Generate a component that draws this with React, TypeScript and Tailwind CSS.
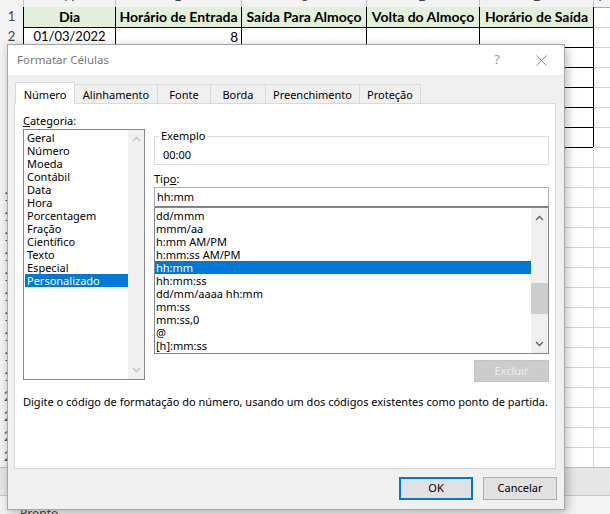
import React from "react";

const catItems = ["Geral", "Número", "Moeda", "Contábil", "Data", "Hora", "Porcentagem", "Fração", "Científico", "Texto", "Especial", "Personalizado"];
const typeItems = ["dd/mmm", "mmm/aa", "h:mm AM/PM", "h:mm:ss AM/PM", "hh:mm", "hh:mm:ss", "dd/mm/aaaa hh:mm", "mm:ss", "mm:ss,0", "@", "[h]:mm:ss"];
const headers = ["Dia", "Horário de Entrada", "Saída Para Almoço", "Volta do Almoço", "Horário de Saída"];
const grid = "grid grid-cols-[24px_92px_126px_125px_113px_114px_1fr] h-[20px] shrink-0";

function Chevron({ up, color }: { up: boolean; color: string }) {
  return (
    <svg width="9" height="6" viewBox="0 0 9 6">
      <path d={up ? "M1 5 L4.5 1.5 L8 5" : "M1 1 L4.5 4.5 L8 1"} fill="none" stroke={color} strokeWidth="1.3" />
    </svg>
  );
}

function Row({ r }: { r: number }) {
  const boxed = r <= 7;
  return (
    <div className={grid}>
      <div
        className={
          boxed
            ? "bg-[#f3f3f3] border-r border-b border-r-black border-b-[#c6c6c6] flex items-center justify-center text-[13px] text-[#444]"
            : "bg-[#f3f3f3] border-r border-b border-r-[#c6c6c6] border-b-[#c6c6c6] flex items-center justify-center text-[13px] text-[#444]"
        }
      >
        {r}
      </div>
      {[0, 1, 2, 3, 4].map((c) => {
        let cls = "border-r border-b border-r-[#d4d4d4] border-b-[#d4d4d4]";
        if (boxed) cls = "border-r border-b border-r-black border-b-black";
        if (r === 1) cls += " bg-[#e2efda] font-bold text-[14px] flex items-center justify-center text-black whitespace-nowrap overflow-hidden";
        else cls += " flex items-center text-[13.5px] text-black";
        let content: React.ReactNode = null;
        if (r === 1) content = headers[c];
        if (r === 2 && c === 0) content = <span className="w-full text-center text-[13px]">01/03/2022</span>;
        if (r === 2 && c === 1) content = <span className="w-full text-right pr-[3px]">8</span>;
        return (
          <div key={c} className={cls}>
            {content}
          </div>
        );
      })}
      <div className="border-b border-b-[#d4d4d4]" />
    </div>
  );
}

function Sheet() {
  const rows = Array.from({ length: 23 }, (_, i) => i + 1);
  return (
    <div className="flex flex-col w-full h-full font-['Lato',sans-serif]">
      <div className={`${grid} -mt-[13px]`}>
        <div className="bg-[#f3f3f3] border-r border-b border-r-[#c6c6c6] border-b-[#ababab]" />
        {["A", "B", "C", "D", "E", "F"].map((l, i) => (
          <div
            key={l}
            className={
              i < 5
                ? "bg-[#f3f3f3] border-r border-b border-r-[#c6c6c6] border-b-black flex items-center justify-center text-[13px] text-[#444]"
                : "bg-[#f3f3f3] border-b border-b-[#ababab] flex items-center justify-center text-[13px] text-[#444]"
            }
          >
            {l}
          </div>
        ))}
      </div>
      {rows.map((r) => (
        <Row key={r} r={r} />
      ))}
      <div className="h-[29px] shrink-0 bg-[#e6e6e6] border-t border-b border-t-[#bdbdbd] border-b-[#c6c6c6]" />
      <div className="flex-1 bg-[#f3f3f3] pl-[20px] pt-[11px] text-[12px] leading-[14px] text-[#444] font-['Noto_Sans',sans-serif]">Pronto</div>
    </div>
  );
}

function Dialog() {
  return (
    <div className="absolute left-[7px] top-[44px] w-[558px] h-[466px] border border-[#a6a6a6] bg-[#f0f0f0] shadow-[2px_3px_10px_rgba(0,0,0,0.28)] font-['Noto_Sans',sans-serif] flex flex-col text-[11px] text-black">
      {/* title bar */}
      <div className="h-[30px] shrink-0 bg-white flex items-center pl-[9px] text-[#7a7a7a]">
        <span className="flex-1 text-[11.5px]">Formatar Células</span>
        <div className="w-[42px] flex justify-center text-[13px] text-[#9a9a9a]">?</div>
        <div className="w-[46px] flex justify-center">
          <svg width="11" height="11" viewBox="0 0 11 11">
            <path d="M0.5 0.5 L10.5 10.5 M10.5 0.5 L0.5 10.5" stroke="#8c8c8c" strokeWidth="1" fill="none" />
          </svg>
        </div>
      </div>

      <div className="flex-1 flex flex-col px-[6px] pt-[7px]">
        {/* tabs */}
        <div className="flex items-end h-[21px] pl-[1px] relative z-10 shrink-0">
          <div className="w-[60px] h-[22px] -mb-px bg-white border border-b-0 border-[#d9d9d9] flex items-center justify-center pt-[3px]">Número</div>
          <div className="w-[83px] h-[19px] border-t border-r border-[#d9d9d9] flex items-center justify-center pt-[3px]">Alinhamento</div>
          <div className="w-[53px] h-[19px] border-t border-r border-[#d9d9d9] flex items-center justify-center pt-[3px]">Fonte</div>
          <div className="w-[55px] h-[19px] border-t border-r border-[#d9d9d9] flex items-center justify-center pt-[3px]">Borda</div>
          <div className="w-[94px] h-[19px] border-t border-r border-[#d9d9d9] flex items-center justify-center pt-[3px]">Preenchimento</div>
          <div className="w-[61px] h-[19px] border-t border-r border-[#d9d9d9] flex items-center justify-center pt-[3px]">Proteção</div>
        </div>

        {/* panel */}
        <div className="w-[542px] h-[366px] shrink-0 bg-white border border-[#d9d9d9] flex flex-col">
          <div className="flex pt-[10px] pl-[8px]">
            {/* left column */}
            <div className="w-[122px] flex flex-col">
              <div className="h-[14px] leading-[14px]">
                <span className="underline">C</span>ategoria:
              </div>
              <div className="mt-[1px] h-[251px] border border-[#828790] flex">
                <div className="flex-1 flex flex-col pt-[1px] pl-[1px]">
                  {catItems.map((c) => (
                    <div
                      key={c}
                      className={
                        c === "Personalizado"
                          ? "h-[13px] leading-[13px] pl-[2px] bg-[#0078d7] text-white"
                          : "h-[13px] leading-[13px] pl-[2px]"
                      }
                    >
                      {c}
                    </div>
                  ))}
                </div>
                <div className="w-[16px] bg-[#f0f0f0] flex flex-col justify-between items-center py-[6px]">
                  <Chevron up color="#c2c2c2" />
                  <Chevron up={false} color="#c2c2c2" />
                </div>
              </div>
            </div>

            {/* right column */}
            <div className="ml-[9px] w-[395px] flex flex-col pt-[15px]">
              <fieldset className="border border-[#dcdcdc] p-0 m-0 pb-[2px]">
                <legend className="ml-[4px] px-[2px] leading-[14px]">Exemplo</legend>
                <div className="mt-[5px] pl-[8px] leading-[14px]">00:00</div>
              </fieldset>
              <div className="mt-[7px] h-[14px] leading-[14px]">
                Tip<span className="underline">o</span>:
              </div>
              <div className="mt-[1px] h-[20px] border border-[#b0b0b0] border-b-[#7a7a7a] flex items-center pl-[2px]">hh:mm</div>
              <div className="h-[147px] border border-[#828790] flex">
                <div className="flex-1 flex flex-col pt-[1px]">
                  {typeItems.map((t) => (
                    <div
                      key={t}
                      className={
                        t === "hh:mm"
                          ? "h-[13px] leading-[13px] pl-[1px] bg-[#0078d7] text-white"
                          : "h-[13px] leading-[13px] pl-[1px]"
                      }
                    >
                      {t}
                    </div>
                  ))}
                </div>
                <div className="w-[17px] bg-[#f0f0f0] flex flex-col">
                  <div className="h-[17px] flex items-center justify-center pt-[2px]">
                    <Chevron up color="#606060" />
                  </div>
                  <div className="flex-1 flex flex-col">
                    <div className="mt-[58px] h-[31px] bg-[#cdcdcd]" />
                  </div>
                  <div className="h-[17px] flex items-center justify-center pb-[1px]">
                    <Chevron up={false} color="#606060" />
                  </div>
                </div>
              </div>
              <div className="mt-[6px] self-end w-[75px] h-[22px] bg-[#cccccc] border border-[#c4c4c4] flex items-center justify-center text-[#eeeeee]">
                Excluir
              </div>
            </div>
          </div>
          <div className="mt-[13px] pl-[8px] leading-[14px] whitespace-nowrap">
            Digite o código de formatação do número, usando um dos códigos existentes como ponto de partida.
          </div>
        </div>

        {/* buttons */}
        <div className="flex justify-end gap-[10px] mt-[8px] mr-[1px]">
          <div className="w-[74px] h-[23px] bg-[#e1e1e1] border-2 border-[#0078d7] flex items-center justify-center">OK</div>
          <div className="w-[74px] h-[23px] bg-[#e1e1e1] border border-[#adadad] flex items-center justify-center">Cancelar</div>
        </div>
      </div>
    </div>
  );
}

export default function App() {
  return (
    <div className="relative w-[610px] h-[514px] overflow-hidden bg-white">
      <Sheet />
      <Dialog />
    </div>
  );
}
